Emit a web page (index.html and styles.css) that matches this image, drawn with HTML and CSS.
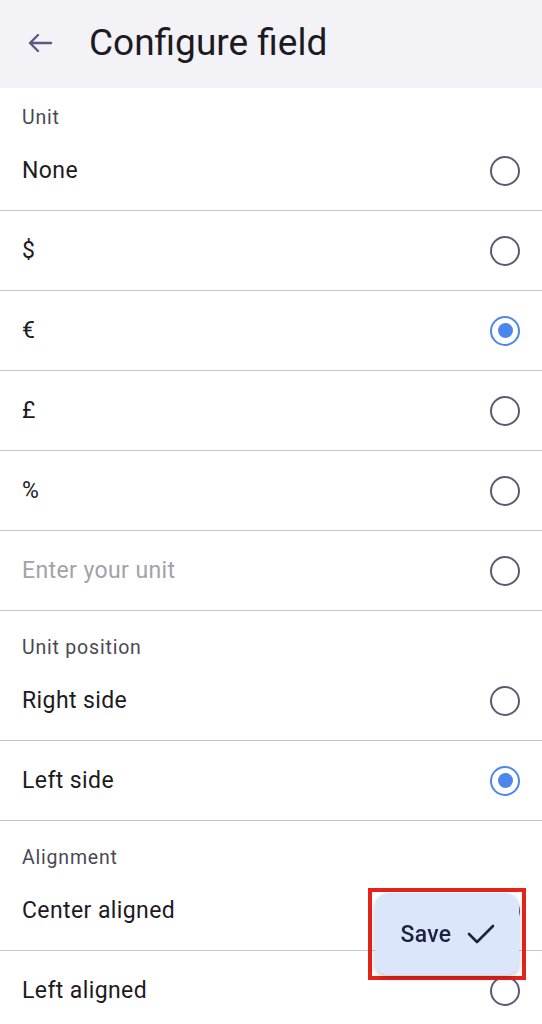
FILE: index.html
```html
<!DOCTYPE html>
<html lang="en">
<head>
    <meta charset="UTF-8">
    <title>Configure field</title>
    <meta name="viewport" content="width=device-width, initial-scale=1.0">
    <link rel="stylesheet" href="styles.css">
</head>
<body>
    <header class="topbar">
        <svg class="back" width="26" height="20" viewBox="0 0 26 20">
            <path d="M24 10H3M11 2L3 10l8 8" fill="none" stroke="#5b5a86" stroke-width="2.4" stroke-linecap="round" stroke-linejoin="round"/>
        </svg>
        <h1>Configure field</h1>
    </header>

    <main>
        <section class="section first">
            <div class="section-label">Unit</div>
            <div class="row"><span>None</span><span class="radio"></span></div>
            <div class="row"><span>$</span><span class="radio"></span></div>
            <div class="row"><span>€</span><span class="radio checked"></span></div>
            <div class="row"><span>£</span><span class="radio"></span></div>
            <div class="row"><span>%</span><span class="radio"></span></div>
            <div class="row"><span class="placeholder">Enter your unit</span><span class="radio"></span></div>
        </section>

        <section class="section">
            <div class="section-label">Unit position</div>
            <div class="row"><span>Right side</span><span class="radio"></span></div>
            <div class="row"><span>Left side</span><span class="radio checked"></span></div>
        </section>

        <section class="section">
            <div class="section-label">Alignment</div>
            <div class="row"><span>Center aligned</span><span class="radio"></span></div>
            <div class="row"><span>Left aligned</span><span class="radio"></span></div>
        </section>
    </main>

    <div class="highlight">
        <button class="fab">
            Save
            <svg width="28" height="22" viewBox="0 0 28 22">
                <path d="M2 11l8 8L26 3" fill="none" stroke="#1c2340" stroke-width="2.6" stroke-linecap="round" stroke-linejoin="round"/>
            </svg>
        </button>
    </div>
</body>
</html>
```

FILE: styles.css
```css
body {
    margin: 0;
    font-family: Roboto, 'Noto Sans', sans-serif;
    background-color: white;
    color: #1c1b22;
    overflow: hidden;
}

.topbar {
    height: 88px;
    background-color: #f3f2f7;
    display: flex;
    align-items: center;
    padding-left: 27px;
    padding-bottom: 3px;
    box-sizing: border-box;
}

.back {
    margin-right: 36px;
}

h1 {
    margin: 0;
    font-size: 37px;
    font-weight: 400;
    color: #1c1b22;
}

.section-label {
    padding: 25px 22px 1px;
    font-size: 19.5px;
    letter-spacing: 0.8px;
    line-height: 24px;
    color: #4a4953;
}

.first .section-label {
    padding-top: 18px;
}

.row {
    height: 79px;
    display: flex;
    align-items: center;
    justify-content: space-between;
    padding: 0 22px;
    font-size: 23px;
    letter-spacing: 0.4px;
    border-bottom: 1.5px solid #c6c4d2;
}

.placeholder {
    color: #a3a2a8;
}

/* radio buttons */
.radio {
    width: 30px;
    height: 30px;
    box-sizing: border-box;
    border: 2.5px solid #5b5a72;
    border-radius: 50%;
    display: flex;
    align-items: center;
    justify-content: center;
}

.radio.checked {
    border-color: #4a86ec;
}

.radio.checked::after {
    content: "";
    width: 15px;
    height: 15px;
    border-radius: 50%;
    background-color: #4a86ec;
}

/* floating save button with red highlight box */
.highlight {
    position: fixed;
    right: 16px;
    bottom: 44px;
    border: 4px solid #e5231b;
    padding: 1px 3px;
}

.fab {
    width: 144px;
    height: 82px;
    border: none;
    border-radius: 14px;
    background-color: #dce6fb;
    box-shadow: 0 3px 6px rgba(0, 0, 0, 0.22);
    display: flex;
    align-items: center;
    justify-content: center;
    gap: 16px;
    font-family: Roboto, sans-serif;
    font-size: 23px;
    letter-spacing: 0.3px;
    font-weight: 500;
    color: #1c2340;
    padding: 0 0 0 2px;
}
```
